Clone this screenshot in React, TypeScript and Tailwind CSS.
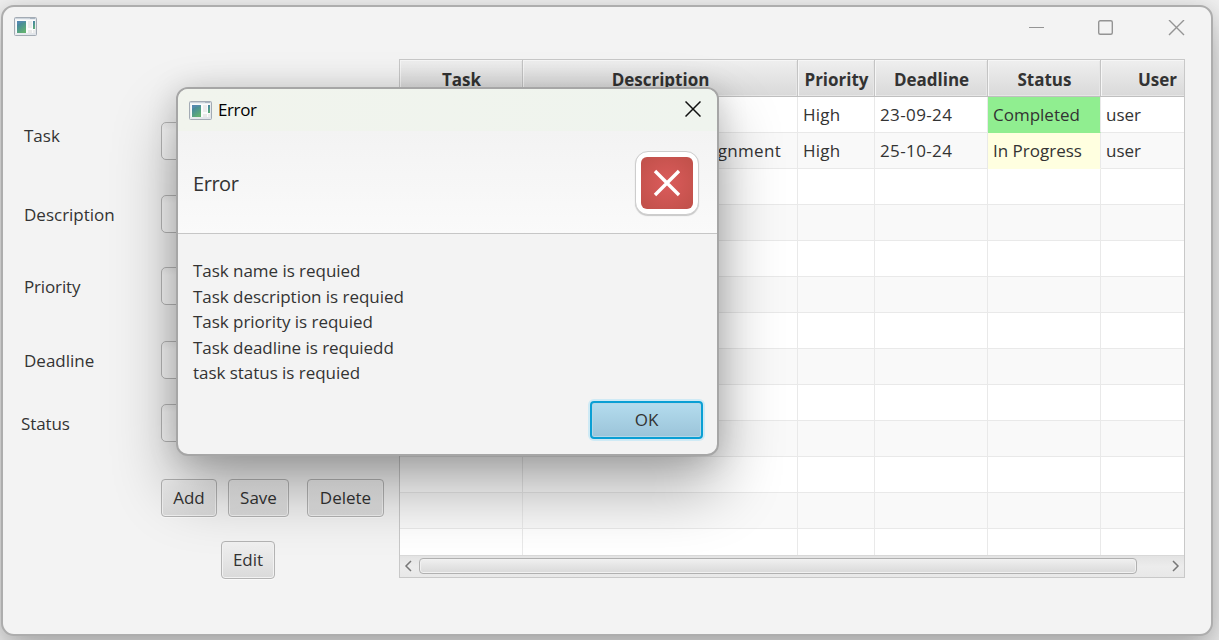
import React from "react";

function AppIcon() {
  return (
    <svg width="23" height="19" viewBox="0 0 23 19" className="shrink-0">
      <defs>
        <linearGradient id="pane" x1="0" y1="0" x2="0.6" y2="1">
          <stop offset="0" stopColor="#4578a8" />
          <stop offset="0.5" stopColor="#4d9592" />
          <stop offset="1" stopColor="#62b072" />
        </linearGradient>
        <linearGradient id="frame" x1="0" y1="0" x2="1" y2="1">
          <stop offset="0" stopColor="#f4f6f8" />
          <stop offset="1" stopColor="#dfe3e8" />
        </linearGradient>
      </defs>
      <rect x="0.5" y="0.5" width="22" height="18" rx="1" fill="url(#frame)" stroke="#a3abb4" />
      <rect x="1" y="1" width="21" height="1" fill="#ccd4dc" />
      <rect x="16" y="1" width="5" height="1" fill="#a9b6c2" />
      <rect x="2" y="3" width="19" height="13" fill="#fbfcfc" />
      <rect x="3" y="4" width="9" height="12" fill="url(#pane)" />
      <path d="M3 8 Q7 5 12 5 V4 H3Z" fill="#5e8fb8" opacity="0.6" />
      <rect x="14" y="4" width="4" height="7" fill="#ececec" />
      <rect x="14" y="13" width="4" height="3" fill="#e9e9e9" />
      <rect x="19" y="4" width="2" height="8" fill="url(#pane)" />
      <rect x="19" y="13" width="2" height="3" fill="#ececec" />
    </svg>
  );
}

const columns = [
  { title: "Task", cls: "w-[123px]", cell: "" },
  { title: "Description", cls: "w-[275px]", cell: "justify-end pr-[16px] tracking-[0.3px]" },
  { title: "Priority", cls: "w-[77px]", cell: "tracking-[0.25px]" },
  { title: "Deadline", cls: "w-[113px]", cell: "tracking-[0.38px]" },
  { title: "Status", cls: "w-[113px]", cell: "" },
  { title: "User", cls: "w-[113px]", cell: "" },
];

const rows: string[][] = [
  ["", "", "High", "23-09-24", "Completed", "user"],
  ["", "Assignment", "High", "25-10-24", "In Progress", "user"],
  ...Array.from({ length: 11 }, () => ["", "", "", "", "", ""]),
];

const statusColor: Record<string, string> = {
  Completed: "bg-[#90ee90] border-b-[#90ee90]",
  "In Progress": "bg-[#ffffe0] border-b-[#ffffe0]",
};

function Table() {
  return (
    <div className="flex h-[519px] w-[786px] flex-col overflow-hidden border border-[#c8c8c8] bg-white">
      <div className="flex h-[37px] w-[827px] shrink-0 border-b border-[#bfbfbf]">
        {columns.map((c) => (
          <div
            key={c.title}
            className={`${c.cls} flex shrink-0 items-center justify-center border-r border-[#c4c4c4] bg-linear-to-b from-[#efefef] to-[#d9d9d9] pt-[4px] pl-[1px] text-[17px] font-bold shadow-[inset_1px_1px_0_#f6f6f6,inset_-1px_-1px_0_#e6e6e6]`}
          >
            {c.title}
          </div>
        ))}
      </div>
      <div className="h-[458px] shrink-0 overflow-hidden">
        {rows.map((r, i) => (
          <div key={i} className={`flex h-[36px] w-[827px] ${i % 2 ? "bg-[#f9f9f9]" : "bg-white"}`}>
            {r.map((v, j) => (
              <div
                key={j}
                className={`${columns[j].cls} ${columns[j].cell} ${statusColor[v] ?? "border-b-[#e9e9e9]"} flex shrink-0 items-center border-r border-b border-r-[#e9e9e9] pl-[5px]`}
              >
                <span>{v}</span>
              </div>
            ))}
          </div>
        ))}
      </div>
      <div className="flex h-[22px] shrink-0 items-center justify-between border-t border-[#d8d8d8] bg-linear-to-b from-[#e3e3e3] via-[#ececec] to-[#e8e8e8] px-[4px] pb-[2px]">
        <svg width="8" height="12" viewBox="0 0 8 12" fill="none" stroke="#777" strokeWidth="1.500">
          <path d="M7 1 L2 6 L7 11" />
        </svg>
        <div className="mr-[35px] ml-[7px] h-[16px] flex-1 rounded-[4px] border border-[#b0b0b0] bg-linear-to-b from-[#f0f0f0] to-[#d9d9d9] shadow-[inset_0_0_0_1px_#f1f1f1]" />
        <svg width="8" height="12" viewBox="0 0 8 12" fill="none" stroke="#777" strokeWidth="1.500">
          <path d="M1 1 L6 6 L1 11" />
        </svg>
      </div>
    </div>
  );
}

function Button({ label, cls }: { label: string; cls: string }) {
  return (
    <button
      className={`${cls} h-[38px] rounded-[4px] border border-[#b4b4b4] bg-linear-to-b from-[#f1f1f1] to-[#dadada] shadow-[inset_0_0_0_1px_#f2f2f2,0_1px_0_#fafafa]`}
    >
      {label}
    </button>
  );
}

const fields = [
  { label: "Task", row: "mt-[72px]", text: "ml-[21px] mb-[10px]" },
  { label: "Description", row: "mt-[35px]", text: "ml-[21px] -mb-[2px]" },
  { label: "Priority", row: "mt-[34px]", text: "ml-[21px] -mb-[2px] tracking-[-0.15px]" },
  { label: "Deadline", row: "mt-[36px]", text: "ml-[21px] -mb-[2px]" },
  { label: "Status", row: "mt-[25px]", text: "ml-[18px] -mb-[2px] tracking-[-0.1px]" },
];

function Form() {
  return (
    <div className="flex w-[396px] shrink-0 flex-col">
      {fields.map((f) => (
        <div key={f.label} className={`${f.row} flex h-[38px] items-center`}>
          <div className="w-[158px]">
            <div className={f.text}>{f.label}</div>
          </div>
          <div className="h-[38px] w-[222px] rounded-[5px] border border-[#b8b8b8] bg-linear-to-b from-[#f0f0f0] to-[#fafafa] to-20%" />
        </div>
      ))}
      <div className="mt-[37px] ml-[158px] flex">
        <Button label="Add" cls="w-[56px]" />
        <Button label="Save" cls="ml-[11px] w-[61px]" />
        <Button label="Delete" cls="ml-[18px] w-[77px]" />
      </div>
      <div className="mt-[24px] ml-[218px] flex">
        <Button label="Edit" cls="w-[54px]" />
      </div>
    </div>
  );
}

function ErrorDialog() {
  return (
    <div className="absolute top-[87px] left-[176px] flex h-[369px] w-[543px] flex-col overflow-hidden rounded-[12px] border-2 border-[#a6a6a6] bg-[#f3f3f3] shadow-[0_32px_64px_rgba(0,0,0,0.33),0_2px_30px_rgba(0,0,0,0.15)]">
      <div className="flex h-[42px] shrink-0 items-center bg-linear-to-r from-[#f1f4ed] to-[#eff4ee] pl-[11px]">
        <AppIcon />
        <span className="ml-[6px] flex-1 text-[17px] tracking-[-0.4px] text-black">Error</span>
        <svg width="16" height="16" viewBox="0 0 16 16" className="mr-[16px] -mt-[2px]" stroke="#111" strokeWidth="1.500">
          <path d="M0.500 0.500 L15.500 15.500 M15.500 0.500 L0.500 15.500" />
        </svg>
      </div>
      <div className="flex h-[103px] shrink-0 items-center justify-between border-b border-[#c6c6c6] bg-linear-to-b from-[#f3f3f3] to-[#fafafa] pr-[18px] pl-[15px]">
        <span className="mt-[3px] text-[20px] tracking-[-0.45px]">Error</span>
        <div className="mt-[1px] rounded-[13px] border border-[#cdcdcd] bg-white p-[5px] shadow-[0_1px_1px_#c8c8c8]">
          <div className="flex h-[52px] w-[52px] items-center justify-center rounded-[6px] bg-radial from-[#db5b5b] to-[#bf5049]">
            <svg width="28" height="28" viewBox="0 0 28 28" stroke="white" strokeWidth="3.400">
              <path d="M2 2 L26 26 M26 2 L2 26" />
            </svg>
          </div>
        </div>
      </div>
      <div className="mt-[24px] ml-[15px] h-[128px] leading-[25.5px] tracking-[-0.04px]">
        <div>Task name is requied</div>
        <div>Task description is requied</div>
        <div>Task priority is requied</div>
        <div>Task deadline is requiedd</div>
        <div>task status is requied</div>
      </div>
      <button className="mt-[15px] mr-[14px] h-[38px] w-[113px] self-end rounded-[4px] border-2 border-[#0a9fd4] bg-linear-to-b from-[#b4dcee] to-[#9bc4d9] shadow-[0_0_0_2px_#cfeaf5,inset_0_0_0_1px_#b3d7e7]">
        OK
      </button>
    </div>
  );
}

export default function App() {
  return (
    <div className="relative h-[640px] w-[1219px] overflow-hidden bg-[#f0f0f0] pt-[5px] pl-[1px] font-['Open_Sans','Noto_Sans',sans-serif] text-[17px] leading-[24px] text-[#333]">
      <div className="flex h-[631px] w-[1212px] flex-col rounded-[13px] border-2 border-[#adadad] bg-[#f3f3f3] shadow-[0_20px_40px_rgba(0,0,0,0.26),0_2px_20px_rgba(0,0,0,0.1)]">
        <div className="flex h-[43px] shrink-0 items-center pl-[11px] text-[#949494]">
          <div className="-mt-[4px] flex-1">
            <AppIcon />
          </div>
          <svg width="156" height="16" viewBox="0 0 156 16" className="mr-[26px] -mt-[1px]" fill="none" stroke="currentColor" strokeWidth="1.400">
            <path d="M0 7.500 H15" strokeWidth="1" />
            <rect x="69.700" y="0.700" width="13.600" height="13.600" rx="1.500" />
            <path d="M140 0 L155 15 M155 0 L140 15" />
          </svg>
        </div>
        <div className="flex">
          <Form />
          <div className="mt-[9px]">
            <Table />
          </div>
        </div>
      </div>
      <ErrorDialog />
    </div>
  );
}
